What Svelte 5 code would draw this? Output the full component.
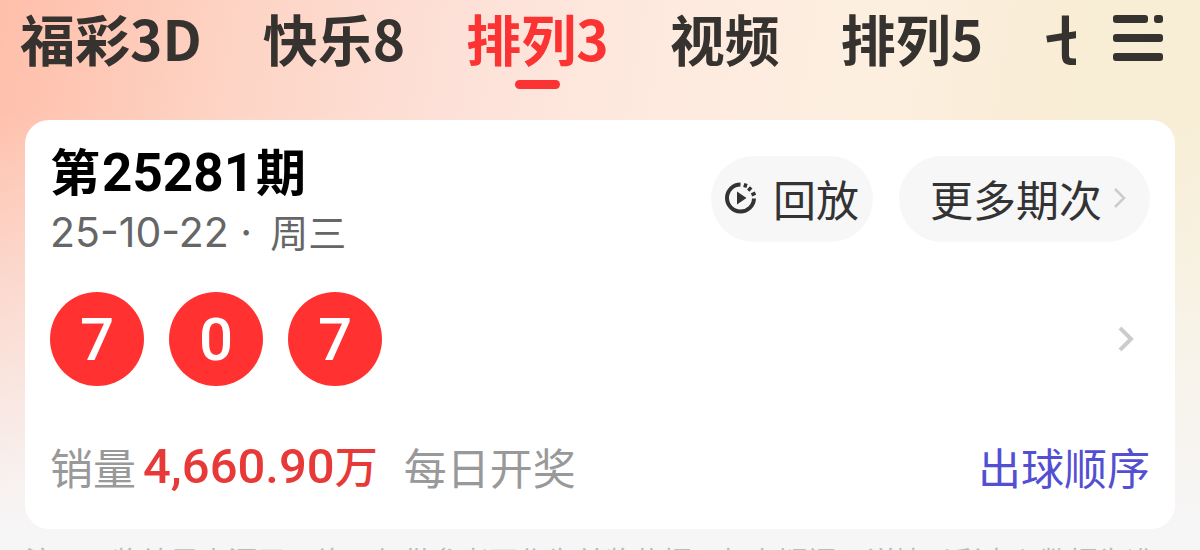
<script lang="ts">
	let active = $state(2);

	const tabs = ['福彩3D', '快乐8', '排列3', '视频', '排列5', '七乐彩'];
	const balls = [7, 0, 7];
</script>

<div class="page">
	<header>
		<nav>
			{#each tabs as tab, i}
				<button class="tab" class:active={i === active} onclick={() => (active = i)}>{tab}</button>
			{/each}
		</nav>
		<button class="menu" aria-label="全部彩种">
			<svg width="52" height="48" viewBox="0 0 52 48" fill="#35322f">
				<rect x="1" y="0" width="35" height="8" rx="3" />
				<rect x="42" y="0" width="9" height="8" rx="3" />
				<rect x="1" y="19" width="50" height="8" rx="3" />
				<rect x="1" y="38" width="50" height="8" rx="3" />
			</svg>
		</button>
	</header>

	<main>
		<div class="top">
			<div class="issue">
				<h1>第<span class="num">25281</span>期</h1>
				<p><span class="date">25-10-22 ·</span>周三</p>
			</div>
			<div class="actions">
				<button class="pill replay">
					<svg width="32" height="32" viewBox="0 0 32 32" fill="none" stroke="#333" stroke-width="4">
						<path d="M15.5 2.5A13.5 13.5 0 1 0 29 16.5" />
						<path d="M19.8 5.6l1.2-4M23.2 8.6l3-3.2M26.5 12.8l4-1.6" stroke-width="3.4" />
						<path d="M12 9.5v13l9.5-6.5z" fill="#333" stroke="none" />
					</svg>
					回放
				</button>
				<button class="pill more">
					更多期次
					<svg width="12" height="20" viewBox="0 0 12 20" fill="none" stroke="#ccc" stroke-width="2.5">
						<path d="M1 1l9 9-9 9" />
					</svg>
				</button>
			</div>
		</div>

		<div class="result">
			{#each balls as ball}
				<span class="ball">{ball}</span>
			{/each}
			<button class="detail" aria-label="开奖详情">
				<svg width="16" height="26" viewBox="0 0 16 26" fill="none" stroke="#ccc" stroke-width="4">
					<path d="M2 2l11 11L2 24" />
				</svg>
			</button>
		</div>

		<div class="bottom">
			<span>销量</span>
			<strong><span class="num">4,660.90</span>万</strong>
			<span class="daily">每日开奖</span>
			<a href="#order">出球顺序</a>
		</div>
	</main>

	<footer>注：开奖结果来源于网络，仅供参考不作为兑奖依据，如有疑问，详情以彩中心数据为准</footer>
</div>

<style>
	:global(body) {
		margin: 0;
		overflow: hidden;
	}

	.page {
		height: 100vh;
		overflow: hidden;
		font-family: "Noto Sans CJK SC", sans-serif;
		background:
			linear-gradient(to bottom, rgba(247, 246, 247, 0) 20%, #f7f6f7 96%),
			linear-gradient(100deg, #ffbfaa 0%, #fdd5c6 20%, #fde1d8 36%, #feeadf 52%, #fcefe0 68%, #f9edd6 82%, #f7efd5 100%);
	}

	button {
		padding: 0;
		border: none;
		background: none;
		font-family: inherit;
		color: inherit;
		cursor: pointer;
	}

	svg {
		display: block;
		flex: none;
	}

	header {
		display: flex;
		align-items: flex-start;
		height: 120px;
		padding: 0 36px 0 20px;
		color: #35322f;
	}

	nav {
		flex: 1;
		min-width: 0;
		display: flex;
		gap: 61px;
		overflow-x: clip;
	}

	.tab {
		flex: none;
		display: flex;
		flex-direction: column;
		align-items: center;
		font-size: 55px;
		line-height: 74px;
		font-weight: 700;
		white-space: nowrap;
	}

	.tab.active {
		color: #fb3333;
	}

	.tab.active::after {
		content: "";
		width: 45px;
		height: 9px;
		margin-top: 6px;
		border-radius: 5px;
		background: #fb3333;
	}

	.menu {
		margin: 15px 0 0 36px;
	}

	main {
		margin: 0 25px;
		padding: 24px 25px 31px;
		border-radius: 24px;
		background: #fff;
	}

	.top {
		display: flex;
		justify-content: space-between;
	}

	h1,
	p {
		margin: 0;
	}

	h1 {
		font-size: 50px;
		line-height: 50px;
		font-weight: 700;
		color: #000;
	}

	.num {
		font-family: Roboto, sans-serif;
	}

	h1 .num {
		margin: 0 2px;
		font-size: 53px;
	}

	p {
		font-size: 38px;
		line-height: 66px;
		color: #666;
	}

	.date {
		margin-right: 18px;
		font-family: Inter, sans-serif;
		font-size: 41px;
	}

	.actions {
		display: flex;
		align-items: flex-start;
		gap: 26px;
		padding-top: 12px;
	}

	.pill {
		display: flex;
		align-items: center;
		height: 86px;
		border-radius: 43px;
		background: #f7f7f7;
		color: #333;
		font-size: 43px;
		line-height: 62px;
	}

	.replay {
		gap: 16px;
		padding: 0 14px 2px 14px;
	}

	.more {
		gap: 12px;
		padding: 0 24px 2px 31px;
	}

	.result {
		display: flex;
		align-items: center;
		gap: 25px;
		padding-top: 27px;
	}

	.ball {
		width: 94px;
		height: 94px;
		border-radius: 50%;
		background: #ff3131;
		color: #fff;
		font-family: Roboto, sans-serif;
		font-size: 60px;
		line-height: 96px;
		font-weight: 500;
		text-align: center;
	}

	.detail {
		margin-left: auto;
		padding: 12px 16px;
	}

	.bottom {
		display: flex;
		align-items: center;
		margin-top: 47px;
		font-size: 43px;
		line-height: 62px;
		color: #999;
	}

	strong {
		margin: 0 26px 0 7px;
		font-weight: 500;
		color: #e73a38;
	}

	strong .num {
		font-size: 49px;
	}

	a {
		margin-left: auto;
		color: #544fd2;
		text-decoration: none;
	}

	footer {
		padding: 11px 25px 0;
		font-size: 29px;
		line-height: 40px;
		color: #bbb;
		white-space: nowrap;
	}
</style>
